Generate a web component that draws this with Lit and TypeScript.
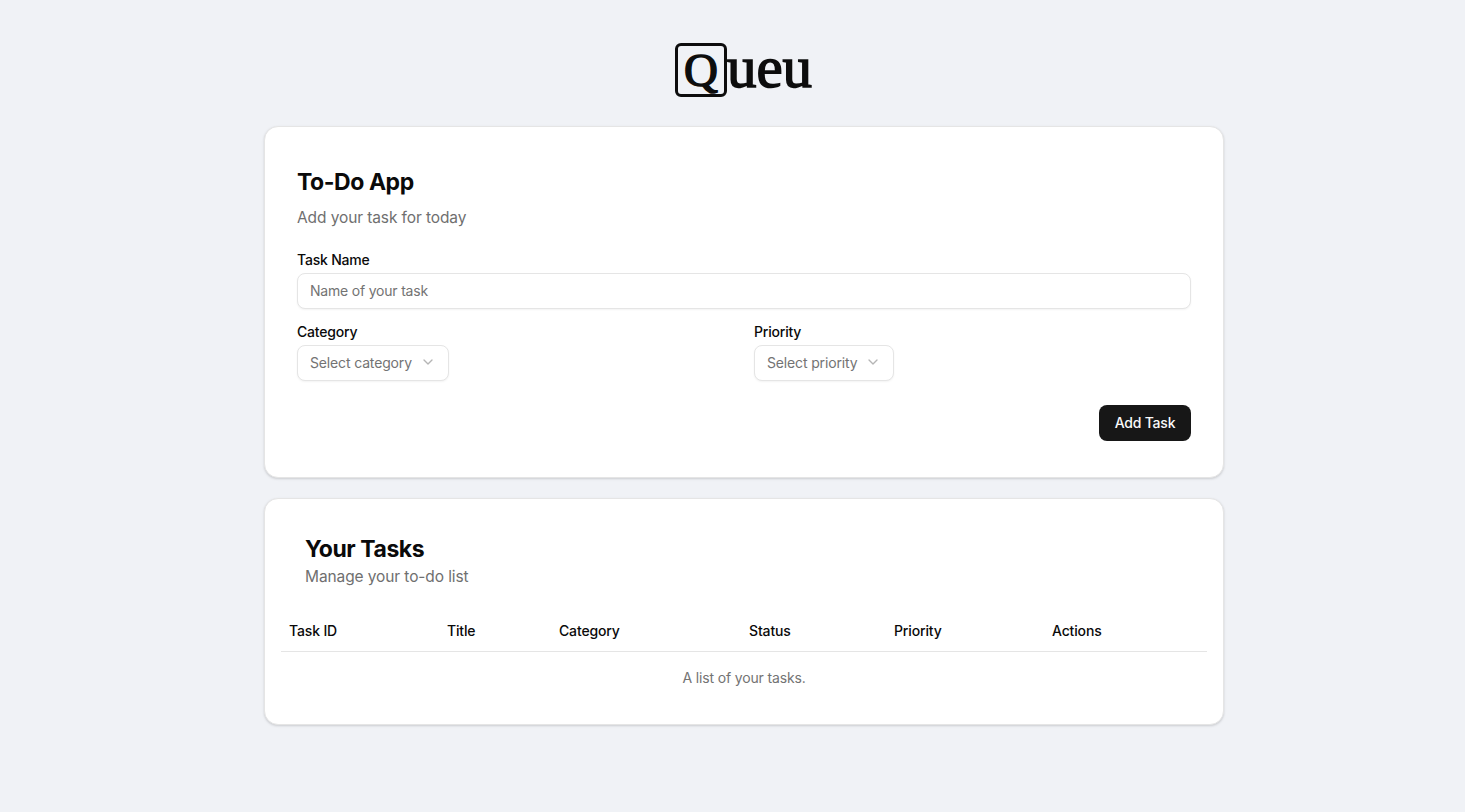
import { LitElement, html, css } from 'lit';
import { customElement } from 'lit/decorators.js';

const chevron = html`<svg class="chev" width="16" height="16" viewBox="0 0 24 24" fill="none" stroke="currentColor" stroke-width="2" stroke-linecap="round" stroke-linejoin="round"><path d="m6 9 6 6 6-6"></path></svg>`;

@customElement('app-root')
export class AppRoot extends LitElement {
  static styles = css`
    :host {
      display: block;
      min-height: 812px;
      background: #f0f2f6;
      font-family: Inter, "Liberation Sans", sans-serif;
      color: #0a0a0a;
    }
    .page {
      width: 960px;
      margin-left: 264px;
      padding-top: 40px;
      display: flex;
      flex-direction: column;
    }
    .logo {
      display: flex;
      justify-content: center;
      height: 58px;
      margin-bottom: 28px;
      padding-right: 1px;
      font-family: "Liberation Serif", serif;
      color: #0d0d0d;
      -webkit-text-stroke: 1.5px #0d0d0d;
    }
    .logo .box {
      width: 52px;
      height: 54px;
      margin-top: 3px;
      box-sizing: border-box;
      border: 3px solid #0d0d0d;
      border-radius: 6px;
      display: flex;
      align-items: center;
      justify-content: center;
      font-size: 47px;
      line-height: 46px;
    }
    .logo .rest {
      font-size: 59px;
      line-height: 54px;
    }
    .card {
      background: #fff;
      border: 1px solid #e5e5e5;
      border-radius: 14px;
      box-shadow: 0 1px 3px rgba(0, 0, 0, 0.1), 0 1px 2px rgba(0, 0, 0, 0.06);
    }
    .form-card {
      height: 352px;
      box-sizing: border-box;
      padding: 39px 32px 0;
      margin-bottom: 20px;
    }
    h1, h2 { margin: 0; font-size: 23px; line-height: 32px; font-weight: 700; letter-spacing: -0.45px; }
    .sub { margin: 0; font-size: 15.5px; line-height: 24px; color: #6f6f6f; letter-spacing: -0.1px; }
    .form-card .sub { margin-top: 8px; margin-bottom: 20px; }
    label { display: block; font-size: 14px; line-height: 20px; font-weight: 450; margin-bottom: 3px; letter-spacing: -0.2px; }
    .input, .select {
      box-sizing: border-box;
      height: 36px;
      padding: 0 12px 2px;
      border: 1px solid #e5e5e5;
      border-radius: 8px;
      background: #fff;
      box-shadow: 0 1px 2px rgba(0, 0, 0, 0.05);
      font-size: 14px;
      letter-spacing: -0.2px;
      color: #737373;
      display: flex;
      align-items: center;
    }
    .row { display: grid; grid-template-columns: 1fr 1fr; column-gap: 20px; margin-top: 13px; }
    .select { display: inline-flex; gap: 8px; letter-spacing: -0.15px; }
    .chev { color: #b5b5b5; }
    .actions { display: flex; justify-content: flex-end; margin-top: 24px; }
    .btn {
      height: 36px;
      width: 92px;
      padding: 0 0 2px;
      border: 0;
      border-radius: 8px;
      background: #171717;
      color: #fafafa;
      font: 450 14px Inter, "Liberation Sans", sans-serif;
      letter-spacing: -0.2px;
    }
    .list-card { height: 227px; box-sizing: border-box; padding: 34px 16px 0; }
    .list-head { padding: 0 24px; margin-bottom: 22px; }
    table { width: 100%; border-collapse: collapse; table-layout: fixed; font-size: 14px; }
    th {
      height: 40px;
      padding: 0 8px 1px;
      box-sizing: border-box;
      text-align: left;
      font-weight: 450;
      letter-spacing: -0.15px;
      border-bottom: 1px solid #e5e5e5;
    }
    caption {
      caption-side: bottom;
      margin-top: 16px;
      font-size: 14px;
      line-height: 20px;
      letter-spacing: -0.15px;
      color: #737373;
    }
  `;

  render() {
    return html`
      <div class="page">
        <div class="logo"><span class="box">Q</span><span class="rest">ueu</span></div>
        <section class="card form-card">
          <h1>To-Do App</h1>
          <p class="sub">Add your task for today</p>
          <label>Task Name</label>
          <div class="input">Name of your task</div>
          <div class="row">
            <div>
              <label>Category</label>
              <div class="select">Select category ${chevron}</div>
            </div>
            <div>
              <label>Priority</label>
              <div class="select">Select priority ${chevron}</div>
            </div>
          </div>
          <div class="actions"><button class="btn">Add Task</button></div>
        </section>
        <section class="card list-card">
          <div class="list-head">
            <h2>Your Tasks</h2>
            <p class="sub">Manage your to-do list</p>
          </div>
          <table>
            <caption>A list of your tasks.</caption>
            <colgroup>
              <col style="width:158px" /><col style="width:112px" /><col style="width:190px" />
              <col style="width:145px" /><col style="width:158px" /><col />
            </colgroup>
            <thead>
              <tr><th>Task ID</th><th>Title</th><th>Category</th><th>Status</th><th>Priority</th><th>Actions</th></tr>
            </thead>
          </table>
        </section>
      </div>
    `;
  }
}
